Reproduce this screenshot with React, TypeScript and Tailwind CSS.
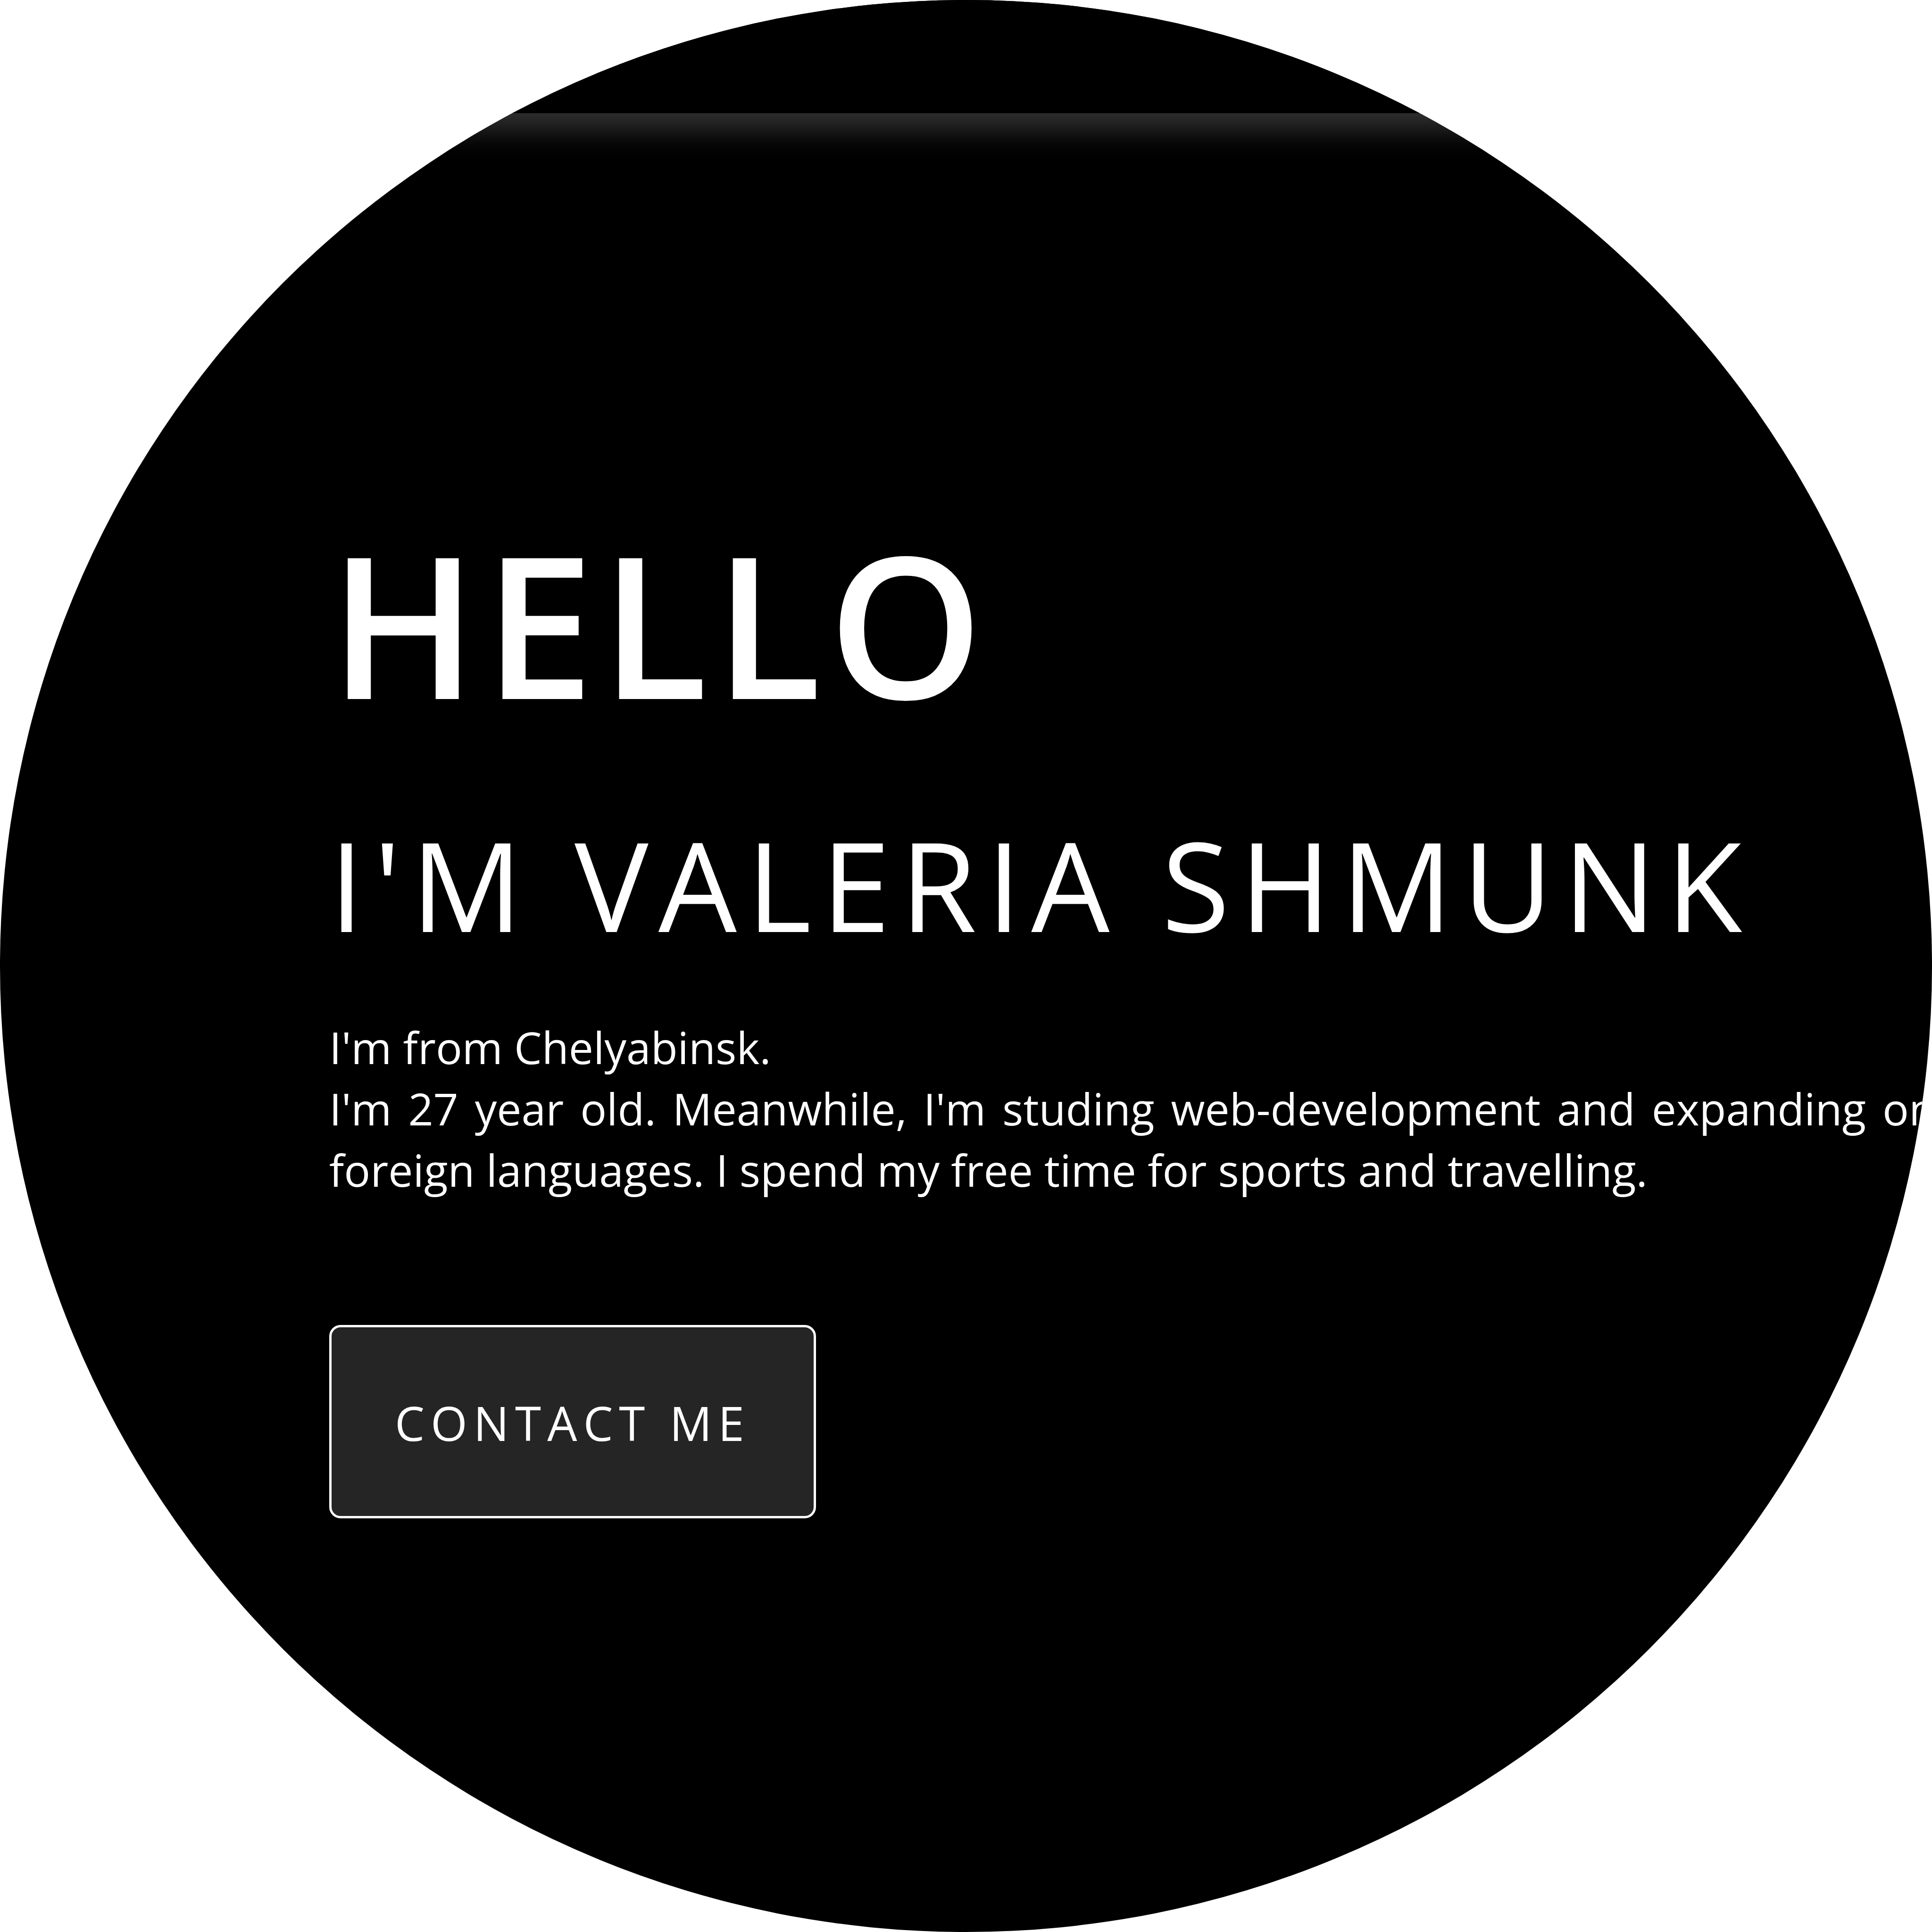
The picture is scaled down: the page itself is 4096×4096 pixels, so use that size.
export default function App() {
  return (
    <div className="w-full bg-white font-['Open_Sans',sans-serif] text-white">
      <div className="aspect-square w-full overflow-hidden rounded-full bg-black">
        <header className="h-[240px] bg-black shadow-[0_34px_57px_rgba(255,255,255,0.2)]" />
        <main className="-mr-2 flex flex-col items-start pt-[870px] pl-[698px]">
          <h1 className="text-[418px] leading-[420px] font-semibold tracking-[14px]">HELLO</h1>
          <h2 className="mt-[212px] text-[263px] leading-[264px] tracking-[21px] whitespace-nowrap">
            I'M VALERIA SHMUNK
          </h2>
          <p className="mt-[149px] text-justify text-[93px] leading-[130px]">
            I'm from Chelyabinsk.
            <br />
            I'm 27 year old. Meanwhile, I'm studing web-development and expanding on foreign
            languages. I spend my free time for sports and travelling.
          </p>
          <button
            type="button"
            className="mt-[264px] rounded-[24px] border-5 border-white bg-[#252525] px-[134px] pt-[132px] pb-[128px] text-[100px] leading-[140px] tracking-[13px] whitespace-nowrap"
          >
            CONTACT ME
          </button>
        </main>
      </div>
    </div>
  );
}
